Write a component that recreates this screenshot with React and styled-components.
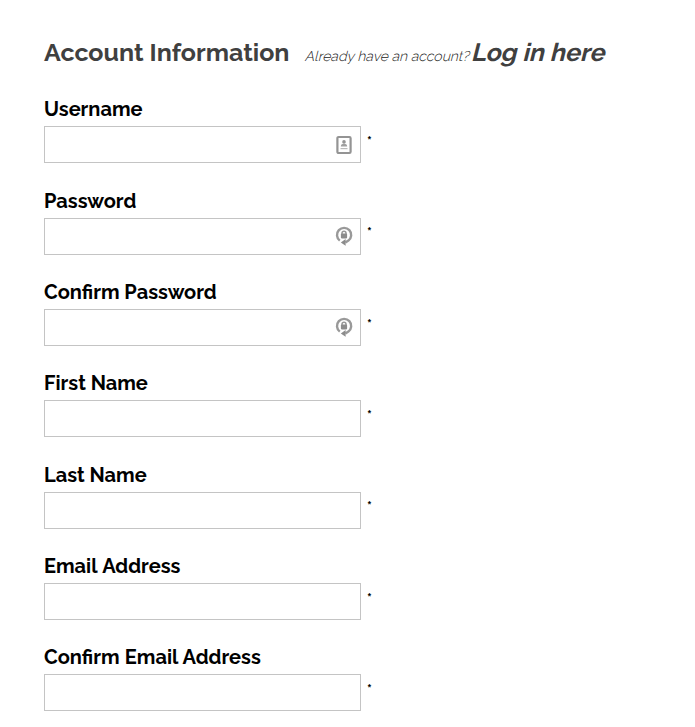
import React from 'react';
import styled, { createGlobalStyle } from 'styled-components';

const GlobalStyle = createGlobalStyle`
  body {
    margin: 0;
    background: #fff;
    color: #000;
    font-family: Raleway, Lato, sans-serif;
    overflow: hidden;
  }
`;

const Page = styled.main`
  padding: 37px 44px 0;
`;

const Header = styled.header`
  display: flex;
  align-items: baseline;
  height: 60.4px;
  line-height: 30px;
  white-space: nowrap;
`;

const Title = styled.h1`
  margin: 0 14.5px 0 0;
  font-size: 25px;
  font-weight: 700;
  color: #404040;
`;

const Prompt = styled.span`
  margin-right: 3px;
  font-size: 14px;
  font-weight: 300;
  color: #222;
  transform: skewX(-14deg);
  transform-origin: 0 75%;
`;

const LoginLink = styled.a`
  font-size: 25px;
  font-weight: 700;
  color: #404040;
  text-decoration: none;
  transform: skewX(-14deg);
  transform-origin: 0 75%;
`;

const Form = styled.form`
  display: flex;
  flex-direction: column;
`;

const Field = styled.div`
  height: 91.31px;
`;

const Label = styled.label`
  display: block;
  width: max-content;
  height: 29px;
  font-size: 20px;
  font-weight: 700;
  line-height: 24px;
  word-spacing: ${(p) => p.$wordGap || 0}px;
`;

const InputRow = styled.div`
  display: flex;
  align-items: flex-start;
  gap: 6px;
`;

const InputBox = styled.div`
  box-sizing: border-box;
  display: flex;
  align-items: center;
  width: 317px;
  height: 37px;
  padding-right: 7px;
  border: 1px solid #c4c4c4;
  background: #fff;
`;

const Input = styled.input`
  flex: 1;
  min-width: 0;
  height: 100%;
  padding: 0 8px;
  border: 0;
  outline: 0;
  background: transparent;
  font: 16px Raleway, Lato, sans-serif;
`;

const Required = styled.span`
  padding-top: 7.7px;
  font-size: 14px;
  font-weight: 700;
  line-height: 16px;
`;

const UserIcon = () => (
  <svg width="18" height="20" viewBox="0 0 18 20">
    <rect x="2.4" y="2" width="13.2" height="16" rx="1.2" fill="#fff" stroke="#949494" strokeWidth="2.2" />
    <circle cx="9" cy="6.9" r="1.8" fill="#959595" />
    <path d="M5.8 11.4c0-2 1.4-2.7 3.2-2.7s3.2.7 3.2 2.7z" fill="#a0a0a0" />
    <path d="M5.5 13.6h7" stroke="#bbb" strokeWidth="1.2" />
  </svg>
);

const PasswordIcon = () => (
  <svg width="18" height="20" viewBox="0 0 18 20">
    <path d="M4.8 14.6A7.1 7.1 0 1 1 13.4 14.6L10.4 16.6" fill="none" stroke="#999" strokeWidth="2.4" />
    <path d="M10.6 12.9v6.8L5.8 16.5z" fill="#8c8c8c" />
    <path d="M7 8.5V7.2a2 2 0 0 1 4 0v1.3" fill="none" stroke="#999" strokeWidth="1.5" />
    <rect x="5.9" y="7.6" width="6.2" height="4.8" rx=".8" fill="#8c8c8c" />
  </svg>
);

const icons = { user: UserIcon, password: PasswordIcon };

const fields = [
  { id: 'username', label: 'Username', icon: 'user' },
  { id: 'password', label: 'Password', type: 'password', icon: 'password' },
  { id: 'confirm-password', label: 'Confirm Password', type: 'password', icon: 'password' },
  { id: 'first-name', label: 'First Name' },
  { id: 'last-name', label: 'Last Name' },
  { id: 'email', label: 'Email Address', type: 'email', wordGap: 1 },
  { id: 'confirm-email', label: 'Confirm Email Address', type: 'email', wordGap: 0.5 },
];

export default function App() {
  return (
    <>
      <GlobalStyle />
      <Page>
        <Header>
          <Title>Account Information</Title>
          <Prompt>Already have an account?</Prompt>
          <LoginLink href="#login">Log in here</LoginLink>
        </Header>
        <Form>
          {fields.map(({ id, label, type = 'text', icon, wordGap }) => {
            const Icon = icons[icon];
            return (
              <Field key={id}>
                <Label htmlFor={id} $wordGap={wordGap}>{label}</Label>
                <InputRow>
                  <InputBox>
                    <Input id={id} type={type} required />
                    {Icon && <Icon />}
                  </InputBox>
                  <Required>*</Required>
                </InputRow>
              </Field>
            );
          })}
        </Form>
      </Page>
    </>
  );
}
